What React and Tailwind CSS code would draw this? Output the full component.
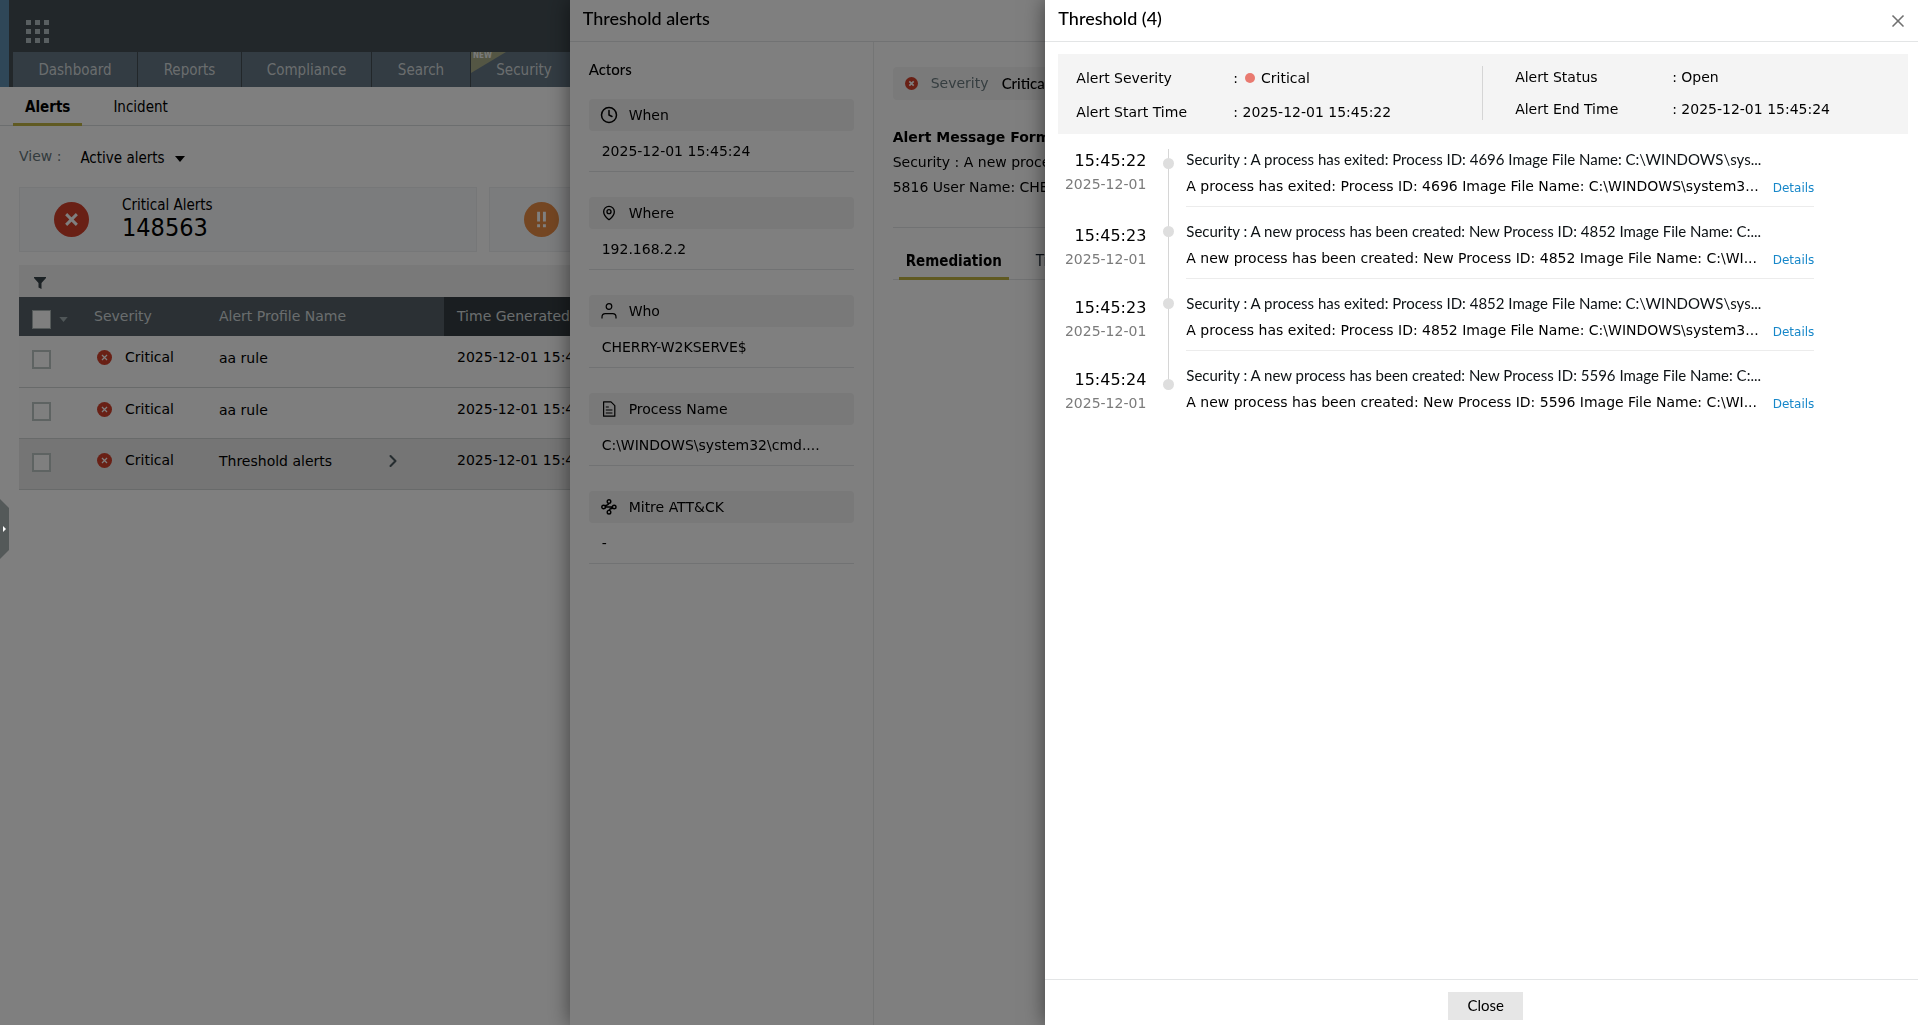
import {
    LuChevronRight,
    LuClock4,
    LuMapPin,
    LuX,
} from "react-icons/lu";

const navItems = [
    { label: "Dashboard", width: "w-[124px]" },
    { label: "Reports", width: "w-[103px]" },
    { label: "Compliance", width: "w-[129px]" },
    { label: "Search", width: "w-[98px]" },
    { label: "Security", width: "w-[106px]", isNew: true },
];

const alertRows = [
    { name: "aa rule", time: "2025-12-01 15:45:24" },
    { name: "aa rule", time: "2025-12-01 15:45:24" },
    { name: "Threshold alerts", time: "2025-12-01 15:45:24", active: true },
];

const MitreIcon = () => (
    <svg viewBox="0 0 16 16" className="h-4 w-4" fill="none" stroke="currentColor" strokeWidth="1.4">
        <circle cx="8" cy="2.6" r="1.8" />
        <circle cx="2.6" cy="8" r="1.8" />
        <circle cx="13.2" cy="8" r="1.8" />
        <circle cx="8" cy="13.2" r="1.8" />
        <path d="M4.4 8h7M4 6.8c2.4-.4 3.6-1.3 3.9-2.6M11.8 9.2c-2.2.2-3.5.9-3.8 2.3" />
    </svg>
);

const ClockIcon = () => <LuClock4 className="h-[18px] w-[18px]" strokeWidth={2} />;

const PinIcon = () => <LuMapPin className="h-4 w-4" strokeWidth={2} />;

const UserIcon = () => (
    <svg viewBox="0 0 16 16" className="h-4 w-4" fill="none" stroke="currentColor" strokeWidth="1.2">
        <circle cx="8" cy="3.5" r="2.8" />
        <path d="M1 15.5v-1.5c0-2 1.4-3.3 3.3-3.3h7.4c1.9 0 3.3 1.3 3.3 3.3v1.5" />
    </svg>
);

const FileIcon = () => (
    <svg viewBox="0 0 16 16" className="h-4 w-4" fill="none" stroke="currentColor" strokeWidth="1.2">
        <path d="M2.6 .8h7.4l3.8 3.8v10.6H2.6z" strokeLinejoin="round" />
        <path d="M4.8 6h3M4.8 9h6.6M4.8 12h6.6" />
    </svg>
);

const actors = [
    { label: "When", value: "2025-12-01 15:45:24", Icon: ClockIcon },
    { label: "Where", value: "192.168.2.2", Icon: PinIcon },
    { label: "Who", value: "CHERRY-W2KSERVE$", Icon: UserIcon },
    { label: "Process Name", value: "C:\\WINDOWS\\system32\\cmd....", Icon: FileIcon },
    { label: "Mitre ATT&CK", value: "-", Icon: MitreIcon },
];

const events = [
    {
        time: "15:45:22",
        title: "Security : A process has exited: Process ID: 4696 Image File Name: C:\\WINDOWS\\sys...",
        text: "A process has exited: Process ID: 4696 Image File Name: C:\\WINDOWS\\system3...",
    },
    {
        time: "15:45:23",
        title: "Security : A new process has been created: New Process ID: 4852 Image File Name: C:...",
        text: "A new process has been created: New Process ID: 4852 Image File Name: C:\\WI...",
    },
    {
        time: "15:45:23",
        title: "Security : A process has exited: Process ID: 4852 Image File Name: C:\\WINDOWS\\sys...",
        text: "A process has exited: Process ID: 4852 Image File Name: C:\\WINDOWS\\system3...",
    },
    {
        time: "15:45:24",
        title: "Security : A new process has been created: New Process ID: 5596 Image File Name: C:...",
        text: "A new process has been created: New Process ID: 5596 Image File Name: C:\\WI...",
    },
];

const CriticalIcon = ({ className, strokeWidth = 1.3 }) => (
    <svg viewBox="0 0 16 16" className={className}>
        <circle cx="8" cy="8" r="8" fill="#d2402b" />
        <path d="M5.3 5.3l5.4 5.4M10.7 5.3l-5.4 5.4" stroke="#fff" strokeWidth={strokeWidth} />
    </svg>
);

const Header = () => (
    <header className="flex bg-[#444f55]">
        <div className="w-[9px] bg-[#5f8fb0]" />
        <div className="grow pl-1">
            <div className="flex h-13 items-end pb-[9px] pl-[13px]">
                <button type="button" aria-label="Apps" className="grid grid-cols-3 gap-1">
                    {[...Array(9)].map((_, i) => (
                        <span key={i} className="h-[5px] w-[5px] bg-[#b3bfc2]" />
                    ))}
                </button>
            </div>
            <nav className="flex h-[35px] gap-px">
                {navItems.map((item) => (
                    <a
                        key={item.label}
                        href="#"
                        className={`relative flex shrink-0 items-center justify-center bg-[#667886] pt-[2px] font-['DejaVu_Sans_Condensed','DejaVu_Sans',sans-serif] text-[15px] text-[#d5dbdd] ${item.width}`}
                    >
                        {item.isNew && (
                            <span className="absolute left-0 top-0 h-[21px] w-[35px] overflow-hidden">
                                <svg viewBox="0 0 35 21" className="absolute inset-0">
                                    <path d="M0 0h35L0 21z" fill="#a9ac88" />
                                </svg>
                                <span className="absolute left-[2px] top-0 text-[8px] font-bold leading-[7px] text-[#f2f5f5]">
                                    NEW
                                </span>
                            </span>
                        )}
                        {item.label}
                    </a>
                ))}
                <div className="-ml-px grow bg-[#667886]" />
            </nav>
        </div>
    </header>
);

const AlertsPage = () => (
    <main>
        <div className="flex h-[39px] gap-[31px] border-b border-[#d9dcde] pl-[13px] font-['DejaVu_Sans_Condensed','DejaVu_Sans',sans-serif] text-[15px]">
            <a href="#" className="flex h-[39px] shrink-0 items-center border-b-3 border-[#c0b445] px-3 pt-[4px] font-bold">
                Alerts
            </a>
            <a href="#" className="flex h-[39px] items-center pt-px">
                Incident
            </a>
        </div>
        <div className="flex h-[61px] items-center pl-[19px]">
            <label htmlFor="view" className="text-[#66767a]">
                View :
            </label>
            <div className="relative ml-[19px] flex items-center pt-1">
                <select
                    id="view"
                    className="appearance-none bg-transparent pr-6 font-['DejaVu_Sans_Condensed','DejaVu_Sans',sans-serif] text-[15px]"
                >
                    <option>Active alerts</option>
                </select>
                <svg viewBox="0 0 10 6" className="pointer-events-none absolute right-1 h-[6px] w-[10px]">
                    <path d="M0 0h10L5 6z" />
                </svg>
            </div>
        </div>

        <div className="flex gap-3 pl-[19px]">
            <section className="flex h-[65px] w-[458px] shrink-0 items-center border border-[#eceef0] bg-[#f7f8fa] pl-[34px]">
                <svg viewBox="0 0 36 36" className="h-[35px] w-[35px]">
                    <circle cx="18" cy="18" r="18" fill="#d2402b" />
                    <path d="M12.5 12.5l11 11M23.5 12.5l-11 11" stroke="#fff" strokeWidth="3" />
                </svg>
                <div className="ml-[33px] pb-1 font-['DejaVu_Sans_Condensed','DejaVu_Sans',sans-serif]">
                    <h3 className="text-[15px] leading-5">Critical Alerts</h3>
                    <p className="text-[25px] leading-[26px]">148563</p>
                </div>
            </section>
            <section className="flex h-[65px] grow items-center border border-[#eceef0] bg-[#f7f8fa] pl-[34px]">
                <svg viewBox="0 0 36 36" className="h-[35px] w-[35px]">
                    <circle cx="18" cy="18" r="18" fill="#e88c45" />
                    <path d="M15 10v10M21 10v10M15 23v3M21 23v3" stroke="#fff" strokeWidth="3" />
                </svg>
            </section>
        </div>

        <div className="pl-[19px] pt-[13px]">
            <div className="flex h-8 items-center bg-[#f2f2f2] pl-[15px] pt-1">
                <button type="button" aria-label="Filter">
                    <svg viewBox="0 0 12 12" className="h-3 w-3">
                        <path d="M0 0h12v1L7.5 6v6L4.5 10.5V6L0 1z" fill="#39444a" />
                    </svg>
                </button>
            </div>
            <table className="w-full table-fixed border-collapse text-left">
                <colgroup>
                    <col className="w-[75px]" />
                    <col className="w-[125px]" />
                    <col className="w-[225px]" />
                    <col />
                </colgroup>
                <thead>
                    <tr className="h-[39px] bg-[#566168] text-[#d5dbdd]">
                        <th className="pl-[13px] font-normal">
                            <div className="flex items-center gap-2 pt-[6px]">
                                <input
                                    type="checkbox"
                                    aria-label="Select all alerts"
                                    className="h-[19px] w-[19px] appearance-none border border-[#aab4b4] bg-white"
                                />
                                <svg viewBox="0 0 10 6" className="h-[5px] w-[9px]">
                                    <path d="M0 0h10L5 6z" fill="#a0adb1" />
                                </svg>
                            </div>
                        </th>
                        <th className="font-normal">Severity</th>
                        <th className="font-normal">Alert Profile Name</th>
                        <th className="bg-[#353d42] pl-[13px] font-normal">Time Generated</th>
                    </tr>
                </thead>
                <tbody>
                    {alertRows.map((row, i) => (
                        <tr
                            key={i}
                            className={`h-[51px] border-b border-[#d0d4d4] align-top ${row.active ? "bg-[#ebebeb]" : "bg-[#fcfcfc]"}`}
                        >
                            <td className="pl-[13px] pt-[14px]">
                                <input
                                    type="checkbox"
                                    aria-label={`Select ${row.name}`}
                                    className="block h-[19px] w-[19px] appearance-none border-2 border-[#bcc6c4] bg-white"
                                />
                            </td>
                            <td className="pt-[11px]">
                                <span className="flex items-center gap-[13px] pl-[3px]">
                                    <CriticalIcon className="h-[15px] w-[15px]" />
                                    Critical
                                </span>
                            </td>
                            <td className="pt-3">
                                <span className="flex items-center justify-between pr-[41px]">
                                    {row.name}
                                    {row.active && (
                                        <LuChevronRight className="h-5 w-5 text-[#4c5a60]" strokeWidth={2.5} />
                                    )}
                                </span>
                            </td>
                            <td className="pl-[13px] pt-[11px]">{row.time}</td>
                        </tr>
                    ))}
                </tbody>
            </table>
        </div>
    </main>
);

const AlertDrawer = () => (
    <section className="fixed inset-y-0 right-0 flex w-[70.3%] flex-col bg-white shadow-[0_0_20px_rgba(0,0,0,0.5)]">
        <h2 className="flex h-[42px] shrink-0 items-center border-b border-[#e3e5e6] pb-[5px] pl-[13px] font-['Lato',sans-serif] text-[18px] font-medium">
            Threshold alerts
        </h2>
        <div className="flex grow">
            <aside className="w-[304px] shrink-0 border-r border-[#e8eaeb] px-[19px] pt-[17px]">
                <h3 className="mb-5 font-['Lato',sans-serif] text-[15px] font-medium leading-5">Actors</h3>
                {actors.map(({ label, value, Icon }) => (
                    <div key={label} className="mb-[25px] border-b border-[#e3e5e6]">
                        <h4 className="flex h-8 items-center rounded-sm bg-[#f2f2f2]">
                            <span className="flex w-10 justify-center">
                                <Icon />
                            </span>
                            {label}
                        </h4>
                        <p className="py-[10px] pl-[13px] leading-5">{value}</p>
                    </div>
                ))}
            </aside>
            <div className="grow whitespace-nowrap pl-[19px] pt-[25px]">
                <div className="flex h-[33px] items-center rounded-sm bg-[#f5f5f5] pl-3">
                    <CriticalIcon className="h-[13px] w-[13px]" strokeWidth={2} />
                    <span className="ml-[13px] w-[71px] text-[#6b7b80]">Severity</span>
                    <span className="font-['Lato',sans-serif] text-[15px] font-medium">Critical</span>
                </div>
                <h3 className="mt-[25px] text-[14px] font-bold leading-[25px]">Alert Message Format</h3>
                <p className="border-b border-[#e3e5e6] pb-[27px] leading-[25px]">
                    Security : A new process
                    <br />
                    5816 User Name: CHER
                </p>
                <div className="mt-[18px] flex h-[34px] gap-[20px] border-b border-[#e3e5e6] pl-[6px] font-['DejaVu_Sans_Condensed','DejaVu_Sans',sans-serif] text-[15px]">
                    <a href="#" className="flex h-[34px] shrink-0 items-center border-b-3 border-[#c0b445] px-[7px] font-bold">
                        Remediation
                    </a>
                    <a href="#" className="flex h-[34px] items-center px-[7px] pb-[3px] text-[#1b2433]">
                        Ti
                    </a>
                </div>
            </div>
        </div>
    </section>
);

const ThresholdDrawer = () => (
    <section
        role="dialog"
        aria-label="Threshold (4)"
        className="fixed inset-y-0 right-0 flex w-[45.5%] flex-col bg-white shadow-[0_0_20px_rgba(0,0,0,0.5)]"
    >
        <div className="flex h-[42px] shrink-0 items-center justify-between border-b border-[#e3e5e6] pl-[13px] pr-[10px]">
            <h2 className="pb-[5px] font-['Lato',sans-serif] text-[18px] font-medium">Threshold (4)</h2>
            <button type="button" aria-label="Close panel" className="text-[#707070]">
                <LuX className="h-5 w-5" strokeWidth={2} />
            </button>
        </div>

        <div className="grow">
            <div className="ml-[13px] mr-[10px] mt-3 flex h-20 bg-[#f4f4f4] pb-[14px] pt-3">
                <dl className="grid w-1/2 grid-cols-[157px_1fr] content-start gap-y-3 border-r border-[#d5d5d5] pl-[18px] pt-px leading-[22px]">
                    <dt>Alert Severity</dt>
                    <dd className="flex items-center">
                        :<span className="ml-[7px] mr-[6px] h-[10px] w-[10px] rounded-full bg-[#e97a70]" />
                        Critical
                    </dd>
                    <dt>Alert Start Time</dt>
                    <dd>: 2025-12-01 15:45:22</dd>
                </dl>
                <dl className="grid w-1/2 grid-cols-[157px_1fr] content-start gap-y-[10px] pl-8 leading-[22px]">
                    <dt>Alert Status</dt>
                    <dd>: Open</dd>
                    <dt>Alert End Time</dt>
                    <dd>: 2025-12-01 15:45:24</dd>
                </dl>
            </div>

            <div className="relative mt-[14px]">
                <span className="absolute left-[123px] top-px h-[236px] w-px bg-[#d6d6d6]" />
                <ol className="relative">
                    {events.map((event, i) => (
                        <li key={i} className="group flex h-[72px]">
                            <div className="w-[101px] pt-1 text-right group-first:pt-px">
                                <p className="text-base leading-6">{event.time}</p>
                                <p className="leading-[22px] text-[#7b7b7b]">2025-12-01</p>
                            </div>
                            <div className="flex w-10 justify-center pl-[5px] pt-[6px] group-first:pt-[10px] group-last:pt-[15px]">
                                <span className="h-[11px] w-[11px] rounded-full bg-[#dedede]" />
                            </div>
                            <div className="mb-[13px] w-[628px] whitespace-nowrap border-b border-[#ececec] group-last:border-b-0">
                                <p className="font-['Lato',sans-serif] text-[15px] leading-[22px] text-[#0c1114]">{event.title}</p>
                                <div className="flex items-center justify-between pt-[5px]">
                                    <p className="leading-[22px]">{event.text}</p>
                                    <a href="#" className="pt-[3px] text-xs text-[#1787c9]">
                                        Details
                                    </a>
                                </div>
                            </div>
                        </li>
                    ))}
                </ol>
            </div>
        </div>

        <footer className="flex h-[46px] shrink-0 justify-center border-t border-[#e3e5e6] pl-2 pt-3">
            <button type="button" className="h-7 w-[75px] bg-[#e6e6e6] pb-[2px] font-['Lato',sans-serif] text-[15px]">
                Close
            </button>
        </footer>
    </section>
);

const App = () => (
    <div className="relative h-screen overflow-hidden bg-white font-['DejaVu_Sans',sans-serif] text-[14px] text-black">
        <Header />
        <AlertsPage />
        <button type="button" aria-label="Expand sidebar" className="absolute left-0 top-[499px]">
            <svg viewBox="0 0 9 60" className="h-[60px] w-[9px]">
                <path d="M0 0l9 9v42l-9 9z" fill="#a9b2b2" />
            </svg>
        </button>
        <AlertDrawer />
        <div className="fixed inset-0 bg-black/50" />
        <svg viewBox="0 0 3 6" className="pointer-events-none absolute left-[3px] top-[526px] h-[6px] w-[3px]">
            <path d="M0 0l3 3-3 3z" fill="#fff" />
        </svg>
        <ThresholdDrawer />
    </div>
);

export default App;
